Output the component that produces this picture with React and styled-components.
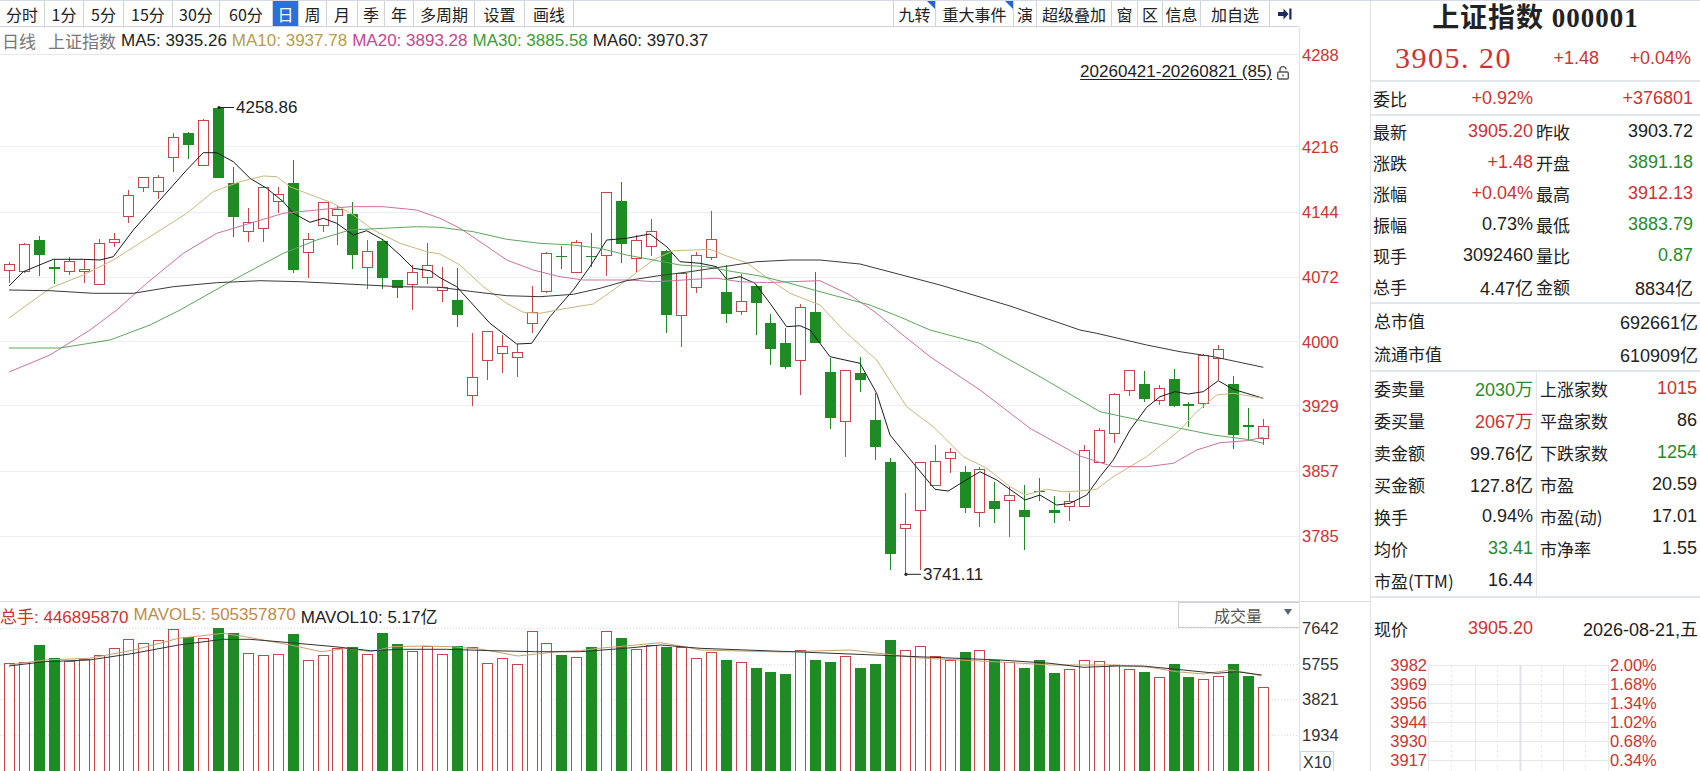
import React from 'react';
import styled, { createGlobalStyle } from 'styled-components';

const RED = '#cc3333';
const GREEN = '#2a8a2a';
const UP = '#c6474b';
const DOWN = '#1e8b24';
const LINE = '#e3e6ed';
const SANS = '"Liberation Sans", "Noto Sans CJK SC", sans-serif';

const GlobalStyle = createGlobalStyle`
  html, body { margin: 0; padding: 0; background: #fff; }
  body { font-family: ${SANS}; color: #222; overflow: hidden; }
  * { box-sizing: border-box; }
`;

// candles in screen y: [bodyTop, bodyBottom, high, low, up?]
const candles = [
  [264, 270.7, 261.7, 282.7, 1], [244, 271.7, 242.7, 273.3, 1], [240, 255, 236, 276, 0], [267, 268.5, 259, 284, 0],
  [261.7, 271.7, 256.7, 275, 1], [269, 271.7, 259.3, 282.7, 1], [243.3, 284, 239.3, 284, 1], [239, 242.7, 232.7, 246.7, 1],
  [195, 216.7, 190, 222.7, 1], [177.3, 187.3, 177.3, 191.7, 1], [177.3, 191.7, 175, 199.3, 1], [137.3, 157.3, 132.7, 171.7, 1],
  [132.7, 145, 131.7, 159.3, 0], [120.7, 165.7, 119.3, 165.7, 1], [108.3, 178.3, 107.9, 178.3, 0], [183.3, 217.3, 167.3, 236.7, 0],
  [222.3, 231.7, 208.3, 241.7, 1], [187.3, 228.3, 186, 241.7, 1], [194, 201.7, 186.7, 213.3, 1], [183.3, 270, 160, 272.7, 0],
  [239, 252.7, 232.7, 278.3, 1], [202.7, 225, 201.7, 231.7, 1], [209, 215.7, 206, 245, 1], [214.3, 255, 201.7, 269.3, 0],
  [251.7, 267.3, 240, 289.3, 1], [241, 278.3, 240, 289.3, 0], [280, 287.7, 280, 298.3, 0], [272.7, 284, 265, 310, 1],
  [265, 277.3, 242.7, 284, 1], [287.3, 290.7, 267.3, 301.7, 1], [300, 315, 268.3, 326.7, 0], [377.3, 395.7, 333.3, 406, 1],
  [331.7, 360.7, 331, 380, 1], [346.7, 353.3, 335, 372.7, 1], [352.3, 357.7, 344, 377.3, 1], [312.3, 323.3, 285.7, 332.7, 1],
  [253.3, 291.7, 251.7, 293.3, 1], [255.5, 257, 246, 269.3, 0], [242.3, 272.7, 240, 272.7, 1], [255.5, 257.3, 233.3, 267.3, 0],
  [192.3, 255, 191.7, 276, 1], [201, 244, 181.7, 262.7, 0], [240, 258.3, 235, 271.7, 1], [231, 246.7, 219.3, 256, 1],
  [251, 315, 250, 332.7, 0], [273.3, 315.7, 272.7, 346.7, 1], [255, 287.3, 251.7, 293.3, 1], [239.3, 257.7, 210.7, 260, 1],
  [291.7, 314, 265, 322.7, 0], [301.7, 311.7, 274, 315, 1], [286, 302.7, 285, 335, 0], [322.7, 349, 314, 365, 0],
  [343.3, 366.7, 327.7, 369.3, 0], [307.3, 360.7, 304, 395, 1], [311.7, 342.7, 271.7, 343.3, 0], [371.7, 417.7, 358.3, 429.3, 0],
  [370, 421.7, 370, 457.3, 1], [373.3, 380, 356.7, 391.7, 0], [420, 446.7, 393, 460, 0], [462.3, 554, 458.3, 570, 0],
  [524.3, 528.3, 492.7, 574.3, 1], [462.7, 510, 462.7, 570, 1], [461, 485.3, 445, 485.3, 1], [452.3, 458.3, 448.3, 473.3, 1],
  [472.3, 508.3, 466, 513.3, 0], [469, 512.3, 466.7, 526.7, 1], [500.7, 509, 481.7, 522.7, 0], [495, 500, 486.7, 536.7, 1],
  [510, 516.7, 485, 550, 0], [490.5, 492, 478.3, 500.7, 0], [510.3, 512.7, 496, 522.7, 0], [501.7, 506.7, 492.7, 521, 1],
  [450.7, 506.7, 445, 506.7, 1], [430, 462.3, 428.3, 462.3, 1], [394.3, 433.3, 392.7, 443.3, 1], [370.7, 390.7, 370, 395.7, 1],
  [384.3, 399, 370.7, 402.3, 0], [388.3, 400, 385, 405.3, 1], [379.3, 406, 369, 407.3, 0], [404, 406, 401.7, 426.7, 0],
  [355.7, 403.3, 354, 407.7, 1], [349, 358.3, 345, 380, 1], [384, 435, 376, 449, 0], [425, 427, 408.3, 441, 0],
  [426, 438.3, 419.3, 445, 1],
];

const volumes = [
  662.7, 661.7, 645, 657.7, 660.7, 659.3, 655.3, 648.3, 639.3, 642.7, 640, 629, 636.7, 638.3, 628.3, 633.3,
  653.3, 655, 654, 634.3, 660, 655, 648.3, 647.3, 654, 633.3, 644, 650.7, 646, 654, 646, 647.3, 662.7, 658.3,
  664, 631, 643.3, 655, 656.7, 647.3, 631, 638.3, 649.3, 645, 647.3, 646.7, 658.3, 652, 660, 662, 668, 672,
  674, 650, 660, 662, 656, 668, 664, 640, 650, 646, 656, 660, 652, 650, 660, 662, 668, 660, 672.7, 669, 660,
  660.7, 665, 669.3, 671.7, 676.7, 664, 676.7, 679, 675.7, 664, 676, 687.3,
];

const maLines = [
  { color: '#1c1c1c', pts: [9, 286, 23.3, 271.7, 53.3, 259.3, 83.3, 259.3, 100, 260, 113.3, 256.7, 133.3, 230, 160, 200, 186.7, 170, 203.3, 152.7, 216.7, 152.7, 233.3, 161.7, 250, 178.3, 266.7, 188.3, 283.3, 201.7, 293.3, 213.3, 310, 222.3, 323.3, 218.3, 336.7, 223.3, 353.3, 235, 366.7, 230.7, 383.3, 240, 400, 255, 413.3, 268.3, 430, 270.7, 440, 277.7, 456.7, 286.7, 473.3, 305, 490, 323.3, 516.7, 344, 531.7, 343.3, 550, 316.7, 573.3, 290, 590, 266.7, 606.7, 240, 626.7, 238.3, 650, 234, 666.7, 246.7, 680, 261.7, 700, 263.3, 716.7, 266.7, 726.7, 279.3, 740, 276.7, 755, 283.3, 770, 303.3, 786.7, 326.7, 800, 325.7, 810, 330, 830, 356.7, 860, 363.3, 876.7, 393.3, 890, 435, 913.3, 463.3, 935, 489.3, 948.3, 491, 963.3, 481.7, 980, 471.7, 996.7, 480, 1025, 500, 1040, 495, 1056.7, 505, 1070, 503.3, 1086.7, 495, 1100, 476.7, 1113.3, 460, 1130, 430, 1146.7, 407.3, 1160, 396.7, 1175, 391.7, 1188.3, 394, 1203.3, 391.7, 1218.3, 380.7, 1233.3, 389.3, 1246.7, 393.3, 1263.3, 398.3] },
  { color: '#c9b77e', pts: [9, 318, 20, 310, 50, 288.3, 83.3, 275, 113.3, 260, 150, 236.7, 186.7, 213.3, 213.3, 191.7, 240, 181.7, 263.3, 176, 276.7, 176.7, 290, 186.7, 306.7, 193.3, 333.3, 203.3, 353.3, 215, 373.3, 230, 400, 243.3, 426.7, 251.7, 440, 254, 460, 265, 483.3, 286.7, 506.7, 303.3, 523.3, 312.3, 540, 313.3, 566.7, 308.3, 593.3, 304, 613.3, 290, 633.3, 275, 653.3, 260, 673.3, 250.7, 693.3, 250, 710, 249.3, 726.7, 256, 746.7, 262.7, 770, 280, 790, 293.3, 820, 305, 843.3, 330, 876.7, 360, 906.7, 406.7, 933.3, 426.7, 963.3, 456.7, 986.7, 468.3, 1010, 486.7, 1025, 495, 1046.7, 489.3, 1063.3, 491.7, 1080, 491, 1096.7, 489.3, 1113.3, 476.7, 1146.7, 456.7, 1180, 430, 1196.7, 411.7, 1216.7, 395, 1233.3, 393.3, 1263.3, 398.3] },
  { color: '#c9729f', pts: [9, 372, 50, 355, 90, 330, 116.7, 310, 146.7, 283.3, 183.3, 253.3, 216.7, 233.3, 250, 223.3, 283.3, 213.3, 316.7, 210, 350, 206.7, 383.3, 206.7, 416.7, 210, 440, 218.3, 460, 228.3, 480, 241.7, 506.7, 260, 533.3, 270, 560, 276.7, 583.3, 280, 606.7, 280, 630, 280, 653.3, 281.7, 673.3, 280.7, 693.3, 279.3, 716.7, 278.3, 740, 281.7, 766.7, 282.7, 790, 281.7, 820, 280.7, 850, 295, 875, 312, 896.7, 330, 930, 356.7, 980, 390, 1030, 428.3, 1080, 456, 1113.3, 466.7, 1146.7, 466.7, 1173.3, 463.3, 1196.7, 450, 1220, 442.7, 1246.7, 440.7, 1263.3, 437.3] },
  { color: '#5ea65e', pts: [9, 348, 60, 348, 110, 340, 150, 325, 180, 310, 233.3, 280, 283.3, 253.3, 316.7, 240, 350, 230, 383.3, 228.3, 416.7, 226.7, 440, 227.3, 473.3, 231.7, 506.7, 239.3, 540, 243.3, 573.3, 245, 600, 248.3, 626.7, 255, 653.3, 260, 680, 265, 706.7, 266.7, 733.3, 271.7, 760, 276, 790, 283.3, 820, 291.7, 870, 305, 900, 317, 930, 330, 980, 343.3, 1040, 376.7, 1100, 411.7, 1146.7, 421.7, 1180, 428.3, 1213.3, 435, 1246.7, 439.3, 1263.3, 443.3] },
  { color: '#3a3a3a', pts: [9, 290, 50, 290.7, 93.3, 293.3, 133.3, 293.3, 173.3, 286.7, 216.7, 282.7, 260, 280.7, 300, 281.7, 333.3, 283.3, 366.7, 285, 400, 286.7, 440, 287.3, 473.3, 291.7, 506.7, 295.7, 540, 296.7, 573.3, 294.3, 600, 288.3, 626.7, 280.7, 656.7, 276, 690, 271.7, 723.3, 266.7, 756.7, 261.7, 790, 260, 820, 260, 860, 264, 940, 285, 1010, 306, 1080, 330, 1096.7, 333.3, 1146.7, 345, 1180, 351.7, 1213.3, 356.7, 1263.3, 367.3] },
];

const volLines = [
  { color: '#c9a06c', pts: [9, 665, 44.6, 660, 89.3, 658.3, 133.9, 650, 178.6, 638.3, 223.2, 633.3, 245.5, 636.7, 290.2, 645, 321.4, 651.7, 348.2, 648.3, 370.5, 651.7, 392.9, 646.7, 424.1, 646, 450.9, 646.7, 482.1, 649.3, 517.9, 656, 558, 651.7, 580.4, 650.7, 598.2, 648.3, 625, 646, 660.7, 642.7, 687.5, 647.3, 700, 650, 780, 652, 850, 650, 920, 658, 1000, 662, 1050, 665, 1083.3, 665, 1116.7, 665, 1150, 667.3, 1176.7, 671.7, 1203.3, 674, 1230, 670, 1250, 673.3, 1261.7, 676] },
  { color: '#333', pts: [9, 666, 44.6, 661.7, 89.3, 660, 133.9, 653.3, 178.6, 645, 223.2, 639.3, 250, 639.3, 290.2, 642.7, 334.8, 646.7, 370.5, 650.7, 401.8, 649.3, 446.4, 649.3, 491.1, 650.7, 535.7, 651.7, 580.4, 651.7, 625, 648.3, 660.7, 645, 700, 648.3, 800, 652, 900, 656, 1000, 660, 1050, 663.3, 1083.3, 667.3, 1116.7, 666, 1143.3, 666, 1183.3, 670, 1216.7, 673.3, 1236.7, 671.7, 1261.7, 675] },
];

const gridY = [146.5, 212.5, 277.5, 341.5, 405.5, 471.5, 536.5];
const priceTicks = [['4288', 55], ['4216', 146.5], ['4144', 212], ['4072', 277], ['4000', 341.5], ['3929', 405.5], ['3857', 471], ['3785', 536]];
const volTicks = [['7642', 628], ['5755', 664], ['3821', 699], ['1934', 735]];

const leftTabs = [['分时', 45], ['1分', 39], ['5分', 40], ['15分', 49], ['30分', 47], ['60分', 53], ['日', 26, true], ['周', 28], ['月', 31], ['季', 27], ['年', 29], ['多周期', 61], ['设置', 50], ['画线', 49]];
const rightTabs = [['九转', 42, false, true], ['重大事件', 78, false, true], ['演', 23], ['超级叠加', 75], ['窗', 26], ['区', 25], ['信息', 38], ['加自选', 69]];

const quoteRows = [
  ['最新', '3905.20', RED, '昨收', '3903.72'],
  ['涨跌', '+1.48', RED, '开盘', '3891.18', GREEN],
  ['涨幅', '+0.04%', RED, '最高', '3912.13', RED],
  ['振幅', '0.73%', null, '最低', '3883.79', GREEN],
  ['现手', '3092460', null, '量比', '0.87', GREEN],
  ['总手', '4.47亿', null, '金额', '8834亿'],
];

const statRows = [
  ['委卖量', '2030万', GREEN, '上涨家数', '1015', RED],
  ['委买量', '2067万', RED, '平盘家数', '86'],
  ['卖金额', '99.76亿', null, '下跌家数', '1254', GREEN],
  ['买金额', '127.8亿', null, '市盈', '20.59'],
  ['换手', '0.94%', null, '市盈(动)', '17.01'],
  ['均价', '33.41', GREEN, '市净率', '1.55'],
  ['市盈(TTM)', '16.44', null, '', ''],
];

const miniRows = [['3982', '2.00%'], ['3969', '1.68%'], ['3956', '1.34%'], ['3944', '1.02%'], ['3930', '0.68%'], ['3917', '0.34%']];

const colX = (i) => Math.round(9 + 14.93 * i);
const toPoints = (a) => {
  let s = '';
  for (let k = 0; k < a.length; k += 2) s += a[k] + ',' + a[k + 1] + ' ';
  return s;
};

const Page = styled.div`
  display: flex;
  width: 1700px;
  height: 771px;
  overflow: hidden;
  border-top: 1px solid #d6dae4;
`;

const Workspace = styled.div`
  width: 1370px;
  display: flex;
  flex-direction: column;
`;

const Toolbar = styled.div`
  width: 1299px;
  height: 26px;
  display: flex;
  border-bottom: 1px solid #cdd3df;
  font-family: "Noto Sans CJK SC", ${SANS};
  font-size: 16px;
`;

const TabGroup = styled.div`
  display: flex;
  margin-left: ${(p) => (p.$right ? 'auto' : '0')};
  border-left: ${(p) => (p.$right ? '1px solid #cdd3df' : 'none')};
`;

const Tab = styled.div`
  position: relative;
  width: ${(p) => p.$w}px;
  display: flex;
  align-items: center;
  justify-content: center;
  border-right: 1px solid #cdd3df;
  background: ${(p) => (p.$active ? '#2c6fd8' : '#fff')};
  color: ${(p) => (p.$active ? '#fff' : '#222')};
  white-space: nowrap;
  line-height: 1;
`;

const Flag = styled.span`
  position: absolute;
  top: 0;
  right: 0;
  border-top: 8px solid #2a66c9;
  border-left: 8px solid transparent;
`;

const ExitTab = styled(Tab)`
  border-right: none;
`;

const ChartBody = styled.div`
  display: flex;
  flex: 1;
`;

const PlotColumn = styled.div`
  width: 1299px;
  display: flex;
  flex-direction: column;
`;

const InfoRow = styled.div`
  height: 28px;
  display: flex;
  align-items: center;
  gap: 5px;
  padding-left: 2px;
  border-bottom: 1px solid #e6e8ee;
  font-size: 17px;
  white-space: nowrap;
`;

const InfoLabel = styled.span`
  color: ${(p) => p.$c || '#777'};
  font-family: "Noto Sans CJK SC", sans-serif;
  margin-right: ${(p) => p.$gap || 0}px;
`;

const MaText = styled.span`
  color: ${(p) => p.$c};
`;

const PricePane = styled.div`
  position: relative;
  height: 546px;
`;

const RangeTag = styled.div`
  position: absolute;
  top: 7px;
  right: 9px;
  display: flex;
  align-items: center;
  gap: 4px;
  font-size: 17px;
  color: #222;
  span { text-decoration: underline; text-underline-offset: 2px; }
`;

const Svg = styled.svg`
  display: block;
  font-family: ${SANS};
`;

const VolumeHeader = styled.div`
  height: 27px;
  display: flex;
  align-items: center;
  gap: 5px;
  border-top: 1px solid #d5dae5;
  font-size: 17px;
  white-space: nowrap;
`;

const VolumeSelect = styled.div`
  margin-left: auto;
  align-self: flex-end;
  width: 121px;
  height: 26px;
  display: flex;
  align-items: center;
  justify-content: flex-end;
  gap: 22px;
  padding-right: 7px;
  border: 1px solid #c8cdd8;
  border-right: none;
  color: #555;
  font-family: "Noto Sans CJK SC", sans-serif;
  font-size: 16px;
  &::after {
    content: '';
    border-top: 6px solid #5c6278;
    border-left: 4px solid transparent;
    border-right: 4px solid transparent;
    margin-bottom: 6px;
  }
`;

const AxisColumn = styled.div`
  width: 71px;
  border-left: 1px solid #dde1ea;
`;

const Panel = styled.aside`
  width: 330px;
  border-left: 1px solid #dfe2ea;
  display: flex;
  flex-direction: column;
  font-size: 18px;
`;

const Title = styled.div`
  height: 35px;
  line-height: 35px;
  text-align: center;
  font-family: "Liberation Serif", "Noto Sans CJK SC", serif;
  font-weight: bold;
  font-size: 27px;
  letter-spacing: 1px;
  color: #222;
`;

const PriceLine = styled.div`
  height: 44px;
  display: grid;
  grid-template-columns: auto 1fr 92px;
  align-items: center;
  padding: 0 9px 0 24px;
  color: ${RED};
  text-align: right;
`;

const BigPrice = styled.span`
  font-family: "Liberation Serif", serif;
  font-size: 30px;
  letter-spacing: 1.5px;
  text-align: left;
  white-space: pre;
`;

const Divider = styled.div`
  height: 2px;
  background: ${LINE};
`;

const Row = styled.div`
  display: grid;
  grid-template-columns: 165px 1fr;
  height: ${(p) => p.$h}px;
`;

const Half = styled.div`
  display: flex;
  align-items: center;
  justify-content: ${(p) => (p.$end ? 'flex-end' : 'space-between')};
  padding: 0 ${(p) => p.$pr}px 0 ${(p) => p.$pl}px;
  border-left: ${(p) => (p.$split ? `1px solid ${LINE}` : 'none')};
  white-space: nowrap;
`;

const WideRow = styled.div`
  height: 33px;
  display: flex;
  align-items: center;
  justify-content: space-between;
  padding: 0 2px 0 3px;
`;

const Label = styled.span`
  font-family: "Noto Sans CJK SC", ${SANS};
  font-size: 17px;
`;

const Val = styled.span`
  color: ${(p) => p.$c || '#222'};
`;

const Candle = ({ c, i }) => {
  const x = colX(i);
  const [top, bottom, high, low, up] = c;
  const h = Math.max(bottom - top, 1.2);
  if (up) {
    return (
      <g stroke={UP} fill="#fff" shapeRendering="crispEdges">
        <line x1={x + 0.5} x2={x + 0.5} y1={high} y2={top} />
        <line x1={x + 0.5} x2={x + 0.5} y1={top + h} y2={low} />
        <rect x={x - 4.5} y={top} width={10} height={h} />
      </g>
    );
  }
  return (
    <g shapeRendering="crispEdges">
      <line x1={x + 0.5} x2={x + 0.5} y1={high} y2={low} stroke={DOWN} />
      <rect x={x - 5} y={top} width={11} height={h} fill={DOWN} />
    </g>
  );
};

const Annotation = ({ x, y, text }) => (
  <g>
    <circle cx={x} cy={y} r={1.6} fill="#222" />
    <line x1={x} x2={x + 15} y1={y} y2={y} stroke="#222" />
    <text x={x + 17} y={y} dominantBaseline="central" fontSize="17" fill="#222">{text}</text>
  </g>
);

const Lock = () => (
  <svg width="14" height="15" viewBox="0 0 14 15">
    <path d="M4 7V4.6a3 3 0 0 1 6 0" fill="none" stroke="#555" strokeWidth="1.4" />
    <rect x="1.7" y="7" width="10.6" height="7" rx="1.2" fill="none" stroke="#555" strokeWidth="1.4" />
    <rect x="6.3" y="9.5" width="1.4" height="2" fill="#555" />
  </svg>
);

const ExitIcon = () => (
  <svg width="15" height="14" viewBox="0 0 15 14">
    <path d="M1 5h5.5V1.5L11.5 7l-5 5.5V9H1z" fill="#1f2b5e" />
    <rect x="12.3" y="1.5" width="2.2" height="11" fill="#1f2b5e" />
  </svg>
);

const PriceChart = () => (
  <Svg width="1299" height="546" viewBox="0 55 1299 546">
    {gridY.map((y) => (
      <line key={y} x1="0" x2="1299" y1={y} y2={y} stroke="#eceef3" />
    ))}
    {candles.map((c, i) => (
      <Candle key={i} c={c} i={i} />
    ))}
    {maLines.map((m) => (
      <polyline key={m.color} points={toPoints(m.pts)} fill="none" stroke={m.color} strokeWidth="1" strokeLinejoin="round" />
    ))}
    <Annotation x={219} y={107.5} text="4258.86" />
    <Annotation x={906} y={574.3} text="3741.11" />
  </Svg>
);

const VolumeChart = () => (
  <Svg width="1299" height="143" viewBox="0 628 1299 143">
    {[628.5, 664.5, 699.5, 735.5].map((y) => (
      <line key={y} x1="0" x2="1299" y1={y} y2={y} stroke="#d9dce3" strokeDasharray="1 2" />
    ))}
    {volumes.map((top, i) => {
      const x = colX(i);
      return candles[i][4] ? (
        <rect key={i} x={x - 4.5} y={top + 0.5} width={10} height={800 - top} fill="#fff" stroke={UP} shapeRendering="crispEdges" />
      ) : (
        <rect key={i} x={x - 5} y={top} width={11} height={800 - top} fill={DOWN} shapeRendering="crispEdges" />
      );
    })}
    {volLines.map((m) => (
      <polyline key={m.color} points={toPoints(m.pts)} fill="none" stroke={m.color} strokeWidth="1" strokeLinejoin="round" />
    ))}
  </Svg>
);

const Axis = () => (
  <Svg width="70" height="744" viewBox="0 0 70 744">
    {priceTicks.map(([t, y]) => (
      <text key={t} x="2" y={y - 27} dominantBaseline="central" fontSize="16.5" fill={RED}>{t}</text>
    ))}
    <line x1="0" x2="70" y1="574.5" y2="574.5" stroke="#d5dae5" />
    {volTicks.map(([t, y]) => (
      <text key={t} x="2" y={y - 27} dominantBaseline="central" fontSize="16.5" fill="#333">{t}</text>
    ))}
    <rect x="0.5" y="724.5" width="33" height="21" fill="#fff" stroke="#d0d5e0" />
    <text x="3" y="735" dominantBaseline="central" fontSize="16" fill="#333">X10</text>
  </Svg>
);

const MiniChart = () => (
  <Svg width="329" height="113" viewBox="0 0 329 113">
    {miniRows.map((r, k) => (
      <line key={k} x1="57" x2="237" y1={7.5 + 19 * k} y2={7.5 + 19 * k} stroke="#e6e8ee" />
    ))}
    {[57.5, 104.5, 192.5, 237.5].map((x) => (
      <line key={x} x1={x} x2={x} y1="7" y2="113" stroke="#e6e8ee" />
    ))}
    <line x1="149.5" x2="149.5" y1="7" y2="113" stroke="#dfe2ea" strokeWidth="2" />
    {[80.5, 126.5, 170.5, 214.5].map((x) => (
      <line key={x} x1={x} x2={x} y1="7" y2="113" stroke="#e3e5eb" strokeDasharray="2 3" />
    ))}
    {miniRows.map(([p, pct], k) => (
      <g key={p} fontSize="16.5" fill={RED}>
        <text x="56" y={7 + 19 * k} textAnchor="end" dominantBaseline="central">{p}</text>
        <text x="239" y={7 + 19 * k} dominantBaseline="central">{pct}</text>
      </g>
    ))}
  </Svg>
);

const QuotePanel = () => (
  <Panel>
    <Title>上证指数 000001</Title>
    <PriceLine>
      <BigPrice>3905. 20</BigPrice>
      <span>+1.48</span>
      <span>+0.04%</span>
    </PriceLine>
    <Divider />
    <Row $h={32}>
      <Half $pl={2} $pr={3}>
        <Label>委比</Label>
        <Val $c={RED}>+0.92%</Val>
      </Half>
      <Half $pl={0} $pr={7} $end>
        <Val $c={RED}>+376801</Val>
      </Half>
    </Row>
    <Divider />
    {quoteRows.map(([l1, v1, c1, l2, v2, c2]) => (
      <Row key={l1} $h={31}>
        <Half $pl={2} $pr={3}>
          <Label>{l1}</Label>
          <Val $c={c1}>{v1}</Val>
        </Half>
        <Half $pl={0} $pr={7}>
          <Label>{l2}</Label>
          <Val $c={c2}>{v2}</Val>
        </Half>
      </Row>
    ))}
    <Divider />
    <WideRow>
      <Label>总市值</Label>
      <Val>692661亿</Val>
    </WideRow>
    <WideRow>
      <Label>流通市值</Label>
      <Val>610909亿</Val>
    </WideRow>
    <Divider />
    {statRows.map(([l1, v1, c1, l2, v2, c2]) => (
      <Row key={l1} $h={32}>
        <Half $pl={3} $pr={3}>
          <Label>{l1}</Label>
          <Val $c={c1}>{v1}</Val>
        </Half>
        <Half $pl={3} $pr={3} $split>
          <Label>{l2}</Label>
          <Val $c={c2}>{v2}</Val>
        </Half>
      </Row>
    ))}
    <Divider />
    <Row $h={60}>
      <Half $pl={3} $pr={3}>
        <Label>现价</Label>
        <Val $c={RED}>3905.20</Val>
      </Half>
      <Half $pl={0} $pr={2} $end>
        <Val>2026-08-21,五</Val>
      </Half>
    </Row>
    <MiniChart />
  </Panel>
);

export default function App() {
  return (
    <>
      <GlobalStyle />
      <Page>
        <Workspace>
          <Toolbar>
            <TabGroup>
              {leftTabs.map(([t, w, active]) => (
                <Tab key={t} $w={w} $active={active}>{t}</Tab>
              ))}
            </TabGroup>
            <TabGroup $right>
              {rightTabs.map(([t, w, active, flag]) => (
                <Tab key={t} $w={w} $active={active}>
                  {t}
                  {flag && <Flag />}
                </Tab>
              ))}
              <ExitTab $w={29}>
                <ExitIcon />
              </ExitTab>
            </TabGroup>
          </Toolbar>
          <ChartBody>
            <PlotColumn>
              <InfoRow>
                <InfoLabel $gap={7}>日线</InfoLabel>
                <InfoLabel>上证指数</InfoLabel>
                <MaText $c="#222">MA5: 3935.26</MaText>
                <MaText $c="#b59c4e">MA10: 3937.78</MaText>
                <MaText $c="#c8458c">MA20: 3893.28</MaText>
                <MaText $c="#3a9d3a">MA30: 3885.58</MaText>
                <MaText $c="#222">MA60: 3970.37</MaText>
              </InfoRow>
              <PricePane>
                <PriceChart />
                <RangeTag>
                  <span>20260421-20260821 (85)</span>
                  <Lock />
                </RangeTag>
              </PricePane>
              <VolumeHeader>
                <MaText $c={RED}>
                  <InfoLabel $c={RED}>总手</InfoLabel>: 446895870
                </MaText>
                <MaText $c="#c08a4c">MAVOL5: 505357870</MaText>
                <MaText $c="#222">MAVOL10: 5.17亿</MaText>
                <VolumeSelect>成交量</VolumeSelect>
              </VolumeHeader>
              <VolumeChart />
            </PlotColumn>
            <AxisColumn>
              <Axis />
            </AxisColumn>
          </ChartBody>
        </Workspace>
        <QuotePanel />
      </Page>
    </>
  );
}
